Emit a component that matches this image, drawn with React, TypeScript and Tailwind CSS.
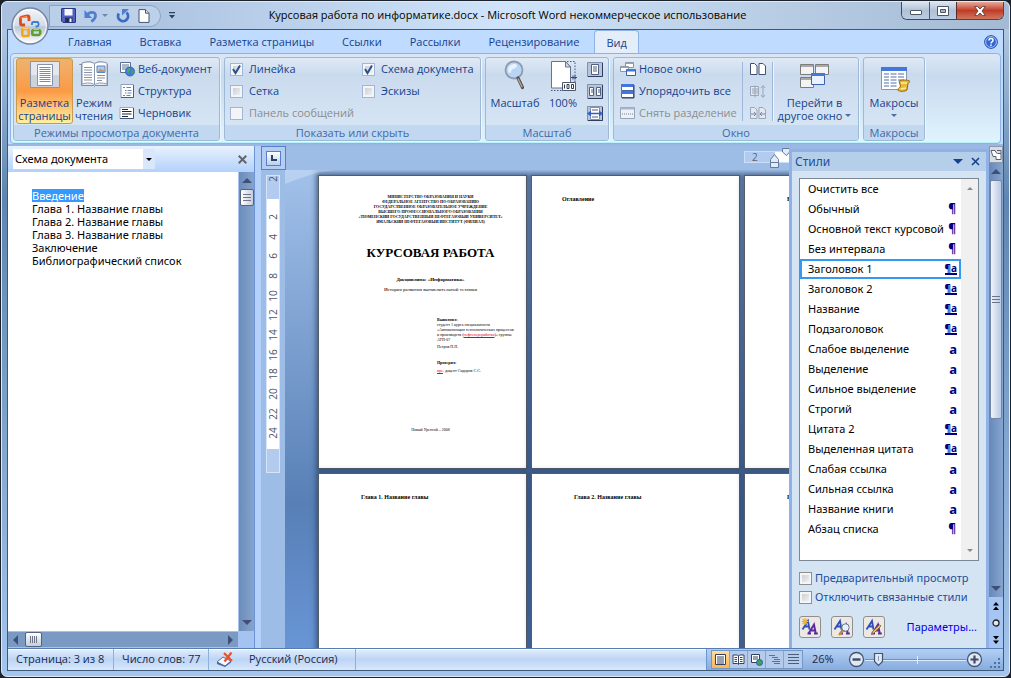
import type { ReactNode } from "react";
import clsx from "clsx";

const UI = "font-['Open_Sans','Noto_Sans',sans-serif]";
const TAHOMA = "font-['Noto_Sans','Open_Sans',sans-serif]";

const tabs = ["Главная", "Вставка", "Разметка страницы", "Ссылки", "Рассылки", "Рецензирование", "Вид"];

const outline = [
  "Введение",
  "Глава 1. Название главы",
  "Глава 2. Название главы",
  "Глава 3. Название главы",
  "Заключение",
  "Библиографический список",
];

const styles: [string, string][] = [
  ["Очистить все", ""],
  ["Обычный", "¶"],
  ["Основной текст курсовой", "¶"],
  ["Без интервала", "¶"],
  ["Заголовок 1", "¶a"],
  ["Заголовок 2", "¶a"],
  ["Название", "¶a"],
  ["Подзаголовок", "¶a"],
  ["Слабое выделение", "a"],
  ["Выделение", "a"],
  ["Сильное выделение", "a"],
  ["Строгий", "a"],
  ["Цитата 2", "¶a"],
  ["Выделенная цитата", "¶a"],
  ["Слабая ссылка", "a"],
  ["Сильная ссылка", "a"],
  ["Название книги", "a"],
  ["Абзац списка", "¶"],
];

const rulerMarks = [2, 4, 6, 8, 10, 12, 14, 16, 18, 20, 22, 24];

function Arrow({ dir, small, className = "fill-[#3f4f78]" }: { dir: "up" | "down" | "left" | "right"; small?: boolean; className?: string }) {
  const d = { up: "M0 5 5 0l5 5z", down: "M0 0h10L5 5z", left: "M5 0v10L0 5z", right: "M0 0v10l5-5z" }[dir];
  const wide = dir === "up" || dir === "down";
  return (
    <svg
      viewBox={wide ? "0 0 10 5" : "0 0 5 10"}
      className={clsx("shrink-0", small ? "h-[3px] w-[6px]" : wide ? "h-[5px] w-[10px]" : "h-[10px] w-[5px]", className)}
    >
      <path d={d} />
    </svg>
  );
}

/* ---------- title bar ---------- */

function OfficeButton() {
  return (
    <button aria-label="Office" className="absolute left-[9px] top-[5px] z-10 h-[38px] w-[38px] rounded-full">
      <svg viewBox="0 0 38 38" className="h-full w-full">
        <defs>
          <linearGradient id="orb" x1="0" y1="0" x2="0" y2="1">
            <stop offset="0" stopColor="#f4f6fa" />
            <stop offset=".5" stopColor="#d3dae6" />
            <stop offset=".52" stopColor="#bcc6d7" />
            <stop offset="1" stopColor="#fff" />
          </linearGradient>
        </defs>
        <circle cx="19" cy="19" r="18" fill="url(#orb)" stroke="#7486a3" strokeWidth="1.4" />
        <circle cx="19" cy="19" r="16.4" fill="none" stroke="#fff" strokeOpacity=".8" />
        <g fill="none" strokeLinejoin="round">
          <path d="M14 18H11a1.500 1.500 0 0 1-1.500-1.500v-5A1.500 1.500 0 0 1 10.700 10l5.800-1.200A1.300 1.300 0 0 1 18 10v4" stroke="#df4b17" strokeWidth="2.800" />
          <path d="M9.500 11l6.500-1.700" stroke="#f79a5c" strokeWidth="1" />
          <path d="M21 18v-1.500a1.500 1.500 0 0 1 1.500-1.500H26a1.500 1.500 0 0 1 1.500 1.500V18a1.500 1.500 0 0 1-1.500 1.500h-1.500" stroke="#3b7fd0" strokeWidth="1.900" />
          <path d="M12.500 22h4a1.200 1.200 0 0 1 1.200 1.200v4.600a1.200 1.200 0 0 1-1.200 1.200h-4a1.200 1.200 0 0 1-1.200-1.200v-4.600A1.200 1.200 0 0 1 12.500 22z" stroke="#f4a61a" strokeWidth="2.600" />
          <path d="M12 21.600h5" stroke="#fcd879" strokeWidth="1" />
          <path d="M22.500 23H28a1.200 1.200 0 0 1 1.200 1.200v2.300L28 28h-5.500a1.200 1.200 0 0 1-1.200-1.200v-2.600A1.200 1.200 0 0 1 22.500 23z" stroke="#5f9f2c" strokeWidth="2.600" />
          <path d="M22.500 22.500H28" stroke="#a7d66f" strokeWidth="1" />
        </g>
      </svg>
    </button>
  );
}

function QuickAccess() {
  return (
    <div className="ml-[40px] flex items-center">
      <div className="flex h-[22px] items-center rounded-r-full border border-[#8ba3c2] bg-[#c3d5ec]/70 pl-[11px] pr-2.5">
        <button aria-label="Сохранить">
          <svg viewBox="0 0 15 15" className="h-[15px] w-[15px]">
            <path d="M1 .5h13a.5.5 0 0 1 .5.5v13a.5.5 0 0 1-.5.5H2L.5 13V1A.5.5 0 0 1 1 .5z" fill="#5262c4" stroke="#2c357f" />
            <path d="M3.500 1h8v6.500h-8z" fill="#f4f7ff" />
            <path d="M4 9.500h7.500V14H4z" fill="#2a2f55" />
            <path d="M8.500 10.500h2V14h-2z" fill="#fff" />
          </svg>
        </button>
        <button aria-label="Отменить" className="ml-2">
          <svg viewBox="0 0 14 14" className="h-[14px] w-[14px]">
            <path d="M3 6C6 2 12 2.500 11.500 7c-.2 2.500-2 4.200-4.200 5.500" fill="none" stroke="#4f7fce" strokeWidth="2.800" />
            <path d="M.5 1v8h7.500z" fill="#4f7fce" />
          </svg>
        </button>
        <Arrow dir="down" small className="ml-1 fill-[#6f88b2]" />
        <button aria-label="Повторить" className="ml-2">
          <svg viewBox="0 0 14 14" className="h-[14px] w-[14px]">
            <path d="M2.800 4.500A5 5 0 1 0 10.500 3.500" fill="none" stroke="#3a6cc4" strokeWidth="2.800" />
            <path d="M6 6.500V0h7z" fill="#4f7fce" />
          </svg>
        </button>
        <button aria-label="Создать" className="ml-2">
          <svg viewBox="0 0 12 14" className="h-[14px] w-[12px]">
            <path d="M1 .6h6.500l3.500 3.600v9.200H1z" fill="#fff" stroke="#44546f" />
            <path d="M7.500.6v3.600H11" fill="#dce4ee" stroke="#44546f" />
          </svg>
        </button>
      </div>
      <button aria-label="Настройка панели" className="ml-2">
        <svg viewBox="0 0 6 7" className="h-[7px] w-[6px]">
          <path d="M0 0h6v1.300H0zM0 3h6L3 6.500z" fill="#28406a" />
        </svg>
      </button>
    </div>
  );
}

function WindowButtons() {
  return (
    <div className="absolute right-[5px] top-0 flex h-[18px] overflow-hidden rounded-b-md border border-t-0 border-[#3e4a5c]">
      <button aria-label="Свернуть" className="flex w-7 items-end justify-center border-r border-[#4c5a70] bg-linear-to-b from-[#dbe5f0] via-[#b1c2d7] to-[#b9cce2] pb-1">
        <span className="h-[5px] w-3 rounded-[1px] border border-[#4d5667] bg-white" />
      </button>
      <button aria-label="Развернуть" className="flex w-[27px] items-center justify-center border-r border-[#5b2a2a] bg-linear-to-b from-[#dbe5f0] via-[#b1c2d7] to-[#b9cce2]">
        <svg viewBox="0 0 12 10" className="h-[10px] w-3">
          <path d="M.5.5h11v9H.5z" fill="#fff" stroke="#4d5667" />
          <path d="M3.500 3.500h5v3h-5z" fill="#a4b5cc" stroke="#4d5667" />
        </svg>
      </button>
      <button aria-label="Закрыть" className="flex w-[46px] items-center justify-center bg-linear-to-b from-[#e6a89a] via-[#bf3b25] to-[#d0755e]">
        <svg viewBox="0 0 12 10" className="h-[10px] w-3">
          <path d="M.6.6h3L6 3 8.400.6h3L8 5l3.400 4.400h-3L6 7 3.600 9.400h-3L4 5z" fill="#fff" stroke="#5f3a3a" strokeWidth=".9" />
        </svg>
      </button>
    </div>
  );
}

/* ---------- ribbon ---------- */

function Group({ title, className, children }: { title: string; className: string; children: ReactNode }) {
  return (
    <section className={clsx("flex shrink-0 flex-col overflow-hidden rounded-[3px] border border-[#9db9d6] bg-linear-to-b from-[#dfe9f5] from-0% via-[#cbdbee] via-20% to-[#d9e8f6] shadow-[1px_1px_0_#edf5fd]", className)}>
      <div className="flex min-h-0 flex-1">{children}</div>
      <h2 className="h-[15px] bg-[#c1d8f0] text-center leading-[15px] text-[#3e6aaa]">{title}</h2>
    </section>
  );
}

function SmallButton({ icon, label, disabled }: { icon: ReactNode; label: string; disabled?: boolean }) {
  return (
    <button disabled={disabled} className={clsx("flex h-[22px] items-center gap-[3px] whitespace-nowrap", disabled && "text-[#8d8d8d]")}>
      <svg viewBox="0 0 16 16" className="h-4 w-4 shrink-0">{icon}</svg>
      {label}
    </button>
  );
}

function BigButton({ icon, lines, className }: { icon: ReactNode; lines: ReactNode[]; className?: string }) {
  return (
    <button className={clsx("flex flex-col items-center", className)}>
      <svg viewBox="0 0 32 32" className="mb-1 h-8 w-8 shrink-0">{icon}</svg>
      {lines.map((l, i) => (
        <span key={i} className="flex h-[13px] items-center gap-[3px] whitespace-nowrap leading-[13px]">{l}</span>
      ))}
    </button>
  );
}

function Check({ label, checked, disabled, className, box = "border-[#9fb6d6]" }: { label: string; checked?: boolean; disabled?: boolean; className?: string; box?: string }) {
  return (
    <label className={clsx("flex items-center whitespace-nowrap", disabled && "text-[#8d8d8d]", className)}>
      <span className="relative h-[13px] w-[13px] shrink-0">
        <input
          type="checkbox"
          defaultChecked={checked}
          disabled={disabled}
          className={clsx(
            "peer block h-[13px] w-[13px] appearance-none border bg-linear-to-br from-[#c3c8cf] to-[#f8f8f8] shadow-[inset_0_0_0_2px_#f4f5f7] disabled:bg-none disabled:bg-[#f4f4f4]",
            box,
          )}
        />
        <svg viewBox="0 0 13 13" className="pointer-events-none absolute inset-0 hidden peer-checked:block">
          <path d="M3 6l2.500 4L10 2.500" fill="none" stroke="#2f4f88" strokeWidth="2" />
        </svg>
      </span>
      {label}
    </label>
  );
}

const icons = {
  layout: (
    <>
      <path d="M1.500 1.500h29v26h-29z" fill="#e4e7ed" stroke="#8b95a6" />
      <path d="M2 15h28v12H2z" fill="#cdd2dc" />
      <path d="M8.500 4.500h15v21h-15z" fill="#fff" stroke="#8592a8" />
      <path d="M10.500 7.500h11m-11 2h11m-11 2h11m-11 2h11m-11 2h11m-11 2h11m-11 2h11m-11 2h11" stroke="#7d8ba5" />
    </>
  ),
  reading: (
    <>
      <path d="M1.500 4.500h2v21h12l1 1 1-1h12v-21h-2V3c-4-1.500-9-1.500-11 1-2-2.500-7-2.500-12-1v1.500z" fill="#e8edf5" stroke="#7a8aa5" />
      <path d="M4 3c5-1.500 10-1.500 12.500 1v21C14 22.500 9 22.500 4 24z" fill="#fff" stroke="#8b98ae" />
      <path d="M29 3c-5-1.500-10-1.500-12.500 1v21C19 22.500 24 22.500 29 24z" fill="#fff" stroke="#8b98ae" />
      <path d="M6 7.500h8M6 10h8m-8 2.500h8M6 15h8m-8 2.500h8M6 20h8m5-4.500h8m-8 2.500h8m-8 2.500h5" stroke="#8793a8" />
      <path d="M19 6h8v6.500h-8z" fill="#a9cdf4" stroke="#5b87c4" />
      <path d="M19.500 12l3-3.500 2 2 1.500-1 1 2.500z" fill="#e08a4c" />
    </>
  ),
  web: (
    <>
      <path d="M1.500 1.500h10v10h-10z" fill="#fff" stroke="#5a6f92" />
      <path d="M3 4h7M3 6h7M3 8h5" stroke="#5a6f92" />
      <circle cx="11" cy="10.500" r="4.500" fill="#3c7fd6" stroke="#2d5c9f" strokeWidth=".8" />
      <path d="M8 8.500c2-2 3.500-1.500 3 .5s-2 1-1.500 3-2-.5-1.500-3.500zM13 9l2 1.500-1.500 3z" fill="#4fae46" />
    </>
  ),
  outline: (
    <>
      <path d="M2 1.500h12.500v13H2z" fill="#fff" stroke="#8f9fbc" />
      <path d="M14.500 2v12.500H2" fill="none" stroke="#46618f" />
      <path d="M4 4.500h2m1.500 0h4.500M6 7.500h1.500m1 0h4M6 10h1.500m1 0h4M4 12.500h2m1.500 0h4" stroke="#6b83b3" />
    </>
  ),
  draft: (
    <>
      <path d="M1 2.500h13.500v11H1z" fill="#fff" stroke="#9aa8c0" />
      <path d="M14.500 3v10.500H1" fill="none" stroke="#3e547e" />
      <path d="M3 4.500h6M3 6.500h9.500M3 9h9.500M3 11.500h6" stroke="#1e2636" />
    </>
  ),
  zoom: (
    <>
      <circle cx="15" cy="10" r="8.500" fill="#b9d5f5" stroke="#8f9cb2" strokeWidth="1.800" />
      <path d="M9 9.500a6 6 0 0 1 6-5.500c3 0 4 2 2 3.500s-4 1-5 4-3 1-3-2z" fill="#e9f3fe" />
      <path d="M19 18l4.500 9.500" stroke="#57504f" strokeWidth="3.200" strokeLinecap="round" />
      <path d="M19 18.500l4.200 8.700" stroke="#b3a8a4" strokeWidth="1.300" />
    </>
  ),
  hundred: (
    <>
      <path d="M20 1.500h8v21M4 30.500h13" fill="none" stroke="#3f5680" strokeDasharray="1.500 1.500" />
      <path d="M4.500 1.500h14l5 5.500v21h-19z" fill="#fff" stroke="#66748c" />
      <path d="M18.500 1.500V7h5z" fill="#d5dde8" stroke="#66748c" />
      <path d="M24 17.500h6m-2-2v4m-2-4v4" fill="none" stroke="#3b4b6b" />
      <path d="M15.500 22.500h13v8h-13z" fill="#fff" stroke="#4b586f" />
      <path d="M17.500 24.500v4M20 24.500h2v4h-2zM24.500 24.500h2v4h-2z" fill="none" stroke="#1f2533" strokeWidth=".9" />
    </>
  ),
  newWindow: (
    <>
      <path d="M5.500 1.500h8v5h-8zM.5 5.500h8v5h-8z" fill="#fff" stroke="#8a93a3" />
      <path d="M5.500 1.500h8v1.500h-8zM.5 5.500h8V7h-8z" fill="#9aa2ae" />
      <path d="M6.500 8.500h9v6h-9z" fill="#fff" stroke="#3d5fa5" />
      <path d="M6.500 8h9v2.500h-9z" fill="#4377dd" />
    </>
  ),
  arrange: (
    <>
      <path d="M1.500 1.500h12v6h-12zM1.500 8.500h12v6h-12z" fill="#fff" stroke="#4a68a8" />
      <path d="M1 1h13v3H1zM1 8h13v3H1z" fill="#4377dd" />
      <path d="M14 2v13H2" fill="none" stroke="#2f3f66" />
    </>
  ),
  split: (
    <>
      <path d="M.5 2.500h14v11H.5z" fill="#eef2f7" stroke="#96a3b8" />
      <path d="M.5 2.500h14v2H.5z" fill="#a9b6ca" />
      <path d="M2 9h12" stroke="#6e7f9d" strokeDasharray="1 1" />
    </>
  ),
  switchWindow: (
    <>
      <path d="M1.500 4.500h13v10h-13zM16.500 4.500h13v10h-13zM1.500 17.500h13v10h-13z" fill="#f3f3f3" stroke="#7c7c7c" />
      <path d="M2 5h12v2H2zM17 5h12v2H17zM2 18h12v2H2z" fill="#a9a9a9" />
      <path d="M12.500 13.500h13v11h-13z" fill="#eaf2ff" stroke="#3b62ae" />
      <path d="M12 13h14v3H12z" fill="#4377dd" />
    </>
  ),
  macros: (
    <>
      <path d="M3.500 7.500h25v22h-25z" fill="#fff" stroke="#8a97ab" />
      <path d="M3 7h26v4H3z" fill="#4377dd" />
      <path d="M6 14h5m1.500 0h6m1.500 0h6M6 17h5m1.500 0h6m1.500 0h6M6 20h5m1.500 0h6m1.500 0h6M6 23h5m1.500 0h6M6 26h5m1.500 0h6" stroke="#8ba0c8" strokeWidth="1.500" />
      <path d="M21 21.500c2-2 9-2 11 0l-2 2-1 6.500c-2 1.500-7 2-9.500 0 1-2 2.500-2 3-4z" fill="#e9b92f" stroke="#8f6a12" />
      <path d="M23 23h6m-6.500 6 5.500-1" stroke="#fbe9a0" strokeWidth="1.500" />
    </>
  ),
};

function ZoomPreset({ label, children }: { label: string; children: ReactNode }) {
  return (
    <button aria-label={label} className="flex h-[22px] items-center">
      <svg viewBox="0 0 16 15" className="h-[15px] w-4">
        <path d="M.5.5h15v14H.5z" fill="#b7c4da" stroke="#8191ad" />
        <path d="M15.500 1v13.500H1" fill="none" stroke="#2e3e62" />
        {children}
      </svg>
    </button>
  );
}

function Ribbon() {
  return (
    <div className="mx-[2px] flex h-[91px] shrink-0 gap-1 rounded border border-[#8db2e3] bg-linear-to-b from-[#dbe7f5] via-[#c8daee] via-25% to-[#e0f4ff] px-[2px] pb-[2px] pt-[3px] shadow-[inset_0_-1px_0_#b8f0fb]">
      <Group title="Режимы просмотра документа" className="w-[207px]">
        <BigButton
          icon={icons.layout}
          lines={["Разметка", "страницы"]}
          className="ml-[2px] h-[66px] w-[57px] rounded-[3px] border border-[#c79a4c] bg-linear-to-b from-[#efb26d] from-0% via-[#fb9a45] via-50% to-[#fff0a0] pt-px"
        />
        <BigButton icon={icons.reading} lines={["Режим", "чтения"]} className="w-[42px] pt-[2px]" />
        <div className="ml-1 flex flex-col">
          <SmallButton icon={icons.web} label="Веб-документ" />
          <SmallButton icon={icons.outline} label="Структура" />
          <SmallButton icon={icons.draft} label="Черновик" />
        </div>
      </Group>
      <Group title="Показать или скрыть" className="w-[257px]">
        <div className="ml-[5px] grid grid-cols-[132px_auto] grid-rows-[22px_22px_22px]">
          <Check label="Линейка" checked className="gap-1.5" />
          <Check label="Схема документа" checked className="gap-1.5" />
          <Check label="Сетка" className="gap-1.5" />
          <Check label="Эскизы" className="gap-1.5" />
          <Check label="Панель сообщений" disabled className="gap-1.5" />
        </div>
      </Group>
      <Group title="Масштаб" className="w-[124px]">
        <BigButton icon={icons.zoom} lines={["Масштаб"]} className="ml-1 w-[50px] pt-[2px]" />
        <BigButton icon={icons.hundred} lines={["100%"]} className="w-[46px] pt-[2px]" />
        <div className="ml-px flex flex-col">
          <ZoomPreset label="Одна страница">
            <path d="M4.500 2.500h7v10h-7z" fill="#fff" stroke="#50607f" />
            <path d="M6 5h4M6 7h4M6 9h4" stroke="#50607f" />
          </ZoomPreset>
          <ZoomPreset label="Две страницы">
            <path d="M2.500 3.500h4v8h-4zM9.500 3.500h4v8h-4z" fill="#fff" stroke="#50607f" />
            <path d="M4 6h2M4 8h2M11 6h2m-2 2h2" stroke="#50607f" />
          </ZoomPreset>
          <ZoomPreset label="По ширине страницы">
            <path d="M3.500 1.500h9v12h-9z" fill="#fff" stroke="#8191ad" />
            <path d="M5 4h6M5 11h6" stroke="#50607f" />
            <path d="M4 7.500h8" stroke="#2f62c9" strokeWidth="1.500" />
            <path d="M0 7.500 4 4.500v6zM16 7.500l-4-3v6z" fill="#2f62c9" />
          </ZoomPreset>
        </div>
      </Group>
      <Group title="Окно" className="w-[246px]">
        <div className="ml-[6px] flex w-[121px] flex-col">
          <SmallButton icon={icons.newWindow} label="Новое окно" />
          <SmallButton icon={icons.arrange} label="Упорядочить все" />
          <SmallButton icon={icons.split} label="Снять разделение" disabled />
        </div>
        <div className="my-1 ml-[1px] flex w-[31px] flex-col items-center border-x border-[#9db8db] shadow-[1px_0_0_#eef5fd]">
          <button aria-label="Рядом" className="h-[14px]">
            <svg viewBox="0 0 16 13" className="h-[13px] w-4">
              <path d="M.5.500h4l2.500 2.500v8.500H.500zM9 .500h4l2.500 2.500v8.500H9z" fill="#fff" stroke="#3f5074" />
            </svg>
          </button>
          <button aria-label="Синхронная прокрутка" disabled className="mt-2 h-[14px]">
            <svg viewBox="0 0 16 13" className="h-[13px] w-4">
              <path d="M.5 1.500h8v9h-8zM5 .500v12M2 4h6M2 6h6M2 8h6" fill="#e4e9f1" stroke="#98a5ba" />
              <path d="M13 1v11M11 3l2-2.500L15 3m-4 7 2 2.500 2-2.500" fill="none" stroke="#98a5ba" />
            </svg>
          </button>
          <button aria-label="Восстановить положение" disabled className="mt-2 h-[14px]">
            <svg viewBox="0 0 16 13" className="h-[13px] w-4">
              <path d="M.5.500h4l2.500 2.500v8.500H.500zM9 .500h4l2.500 2.500v8.500H9z" fill="#e4e9f1" stroke="#98a5ba" />
              <path d="M1 7h5M4 5l2 2-2 2m11-2h-5m2-2-2 2 2 2" fill="none" stroke="#7686a3" />
            </svg>
          </button>
        </div>
        <BigButton
          icon={icons.switchWindow}
          lines={["Перейти в", <>другое окно <Arrow dir="down" small className="fill-[#4a6fa8]" /></>]}
          className="w-[83px] pt-[2px]"
        />
      </Group>
      <Group title="Макросы" className="w-[62px]">
        <BigButton icon={icons.macros} lines={["Макросы", <Arrow dir="down" small className="fill-[#4a6fa8]" />]} className="w-[60px] pt-[2px]" />
      </Group>
    </div>
  );
}

/* ---------- document map ---------- */

function DocumentMap() {
  return (
    <aside className="flex w-[246px] shrink-0 flex-col bg-white">
      <header className="flex h-[26px] items-center justify-between bg-linear-to-b from-[#e9f2fe] to-[#b3d1fb] pl-[5px] pr-[7px]">
        <div className="relative">
          <select aria-label="Область" className={clsx(TAHOMA, "h-5 w-[142px] appearance-none bg-white pl-[2px] text-[11px] text-black")}>
            <option>Схема документа</option>
          </select>
          <span className="pointer-events-none absolute right-0 top-0 flex h-full w-3 items-center justify-center bg-[#d8e7fb]">
            <Arrow dir="down" small className="fill-black" />
          </span>
        </div>
        <button aria-label="Закрыть">
          <svg viewBox="0 0 9 9" className="h-[9px] w-[9px]">
            <path d="M.7.7l7.600 7.600M8.300.7.7 8.300" stroke="#62666e" strokeWidth="2" />
          </svg>
        </button>
      </header>
      <div className="flex min-h-0 flex-1">
        <nav className={clsx(TAHOMA, "min-w-0 flex-1 pl-6 pt-[17px] text-[11px] text-black")}>
          <ul>
            {outline.map((t, i) => (
              <li key={t} className="h-[13px] leading-[13px]">
                <a href="#doc" className={clsx(i === 0 && "inline-block bg-[#3399ff] text-white")}>{t}</a>
              </li>
            ))}
          </ul>
        </nav>
        <div className="flex w-[16px] flex-col items-center border-l border-[#a9c5ee] bg-linear-to-r from-[#6b8cba] to-[#86a4cd] pb-[6px] pt-[6px]">
          <Arrow dir="up" />
          <div className="mt-1.5 flex h-[17px] w-[14px] flex-col justify-center gap-[2px] rounded-[2px] border border-[#56657f] bg-linear-to-r from-white to-[#c7ccd8] px-[2px]">
            <span className="h-px bg-[#6d7689]" />
            <span className="h-px bg-[#6d7689]" />
            <span className="h-px bg-[#6d7689]" />
          </div>
          <Arrow dir="down" className="mt-auto fill-[#3f4f78]" />
        </div>
      </div>
      <div className="flex h-[17px] bg-[#a4c3f1]">
        <div className="flex flex-1 items-center border-y border-[#a4c3f1] bg-[#7a9ac4] px-[5px]">
          <Arrow dir="left" />
          <div className="ml-[7px] flex h-[15px] w-[17px] items-center justify-center gap-px rounded-[2px] border border-[#56657f] bg-linear-to-b from-white to-[#c7ccd8]">
            <span className="h-[7px] w-px bg-[#6d7689]" />
            <span className="h-[7px] w-px bg-[#6d7689]" />
            <span className="h-[7px] w-px bg-[#6d7689]" />
            <span className="h-[7px] w-px bg-[#6d7689]" />
          </div>
          <Arrow dir="right" className="ml-auto fill-[#3f4f78]" />
        </div>
        <div className="w-4" />
      </div>
    </aside>
  );
}

/* ---------- pages ---------- */

function Page({ children }: { children?: ReactNode }) {
  return (
    <article className="h-[294px] overflow-hidden border border-[#555d68] bg-white font-['Liberation_Serif',serif] text-black shadow-[0_0_5px_2px_rgba(30,55,95,0.65)]">
      {children}
    </article>
  );
}

function TitlePage() {
  return (
    <Page>
      <div className="pl-4 pt-[18px] text-center text-[4px] font-bold leading-[5px]">
        <p>МИНИСТЕРСТВО ОБРАЗОВАНИЯ И НАУКИ</p>
        <p>ФЕДЕРАЛЬНОЕ АГЕНТСТВО ПО ОБРАЗОВАНИЮ</p>
        <p>ГОСУДАРСТВЕННОЕ ОБРАЗОВАТЕЛЬНОЕ УЧРЕЖДЕНИЕ</p>
        <p>ВЫСШЕГО ПРОФЕССИОНАЛЬНОГО ОБРАЗОВАНИЯ</p>
        <p>«ТЮМЕНСКИЙ ГОСУДАРСТВЕННЫЙ НЕФТЕГАЗОВЫЙ УНИВЕРСИТЕТ»</p>
        <p>ЯМАЛЬСКИЙ НЕФТЕГАЗОВЫЙ ИНСТИТУТ (ФИЛИАЛ)</p>
      </div>
      <h1 className="mt-[21px] pl-4 text-center text-[13px] font-bold leading-4">КУРСОВАЯ РАБОТА</h1>
      <p className="mt-4 pl-4 text-center text-[5px] leading-[6px]">
        <b>Дисциплина: «Информатика»</b>
      </p>
      <p className="mt-1 pl-4 text-center text-[5px] leading-[6px]">История развития вычислительной техники</p>
      <div className="mt-[24px] pl-[118px] text-[4px] leading-[5px]">
        <p className="font-bold">Выполнил:</p>
        <p>студент 1 курса специальности</p>
        <p className="whitespace-nowrap">«Автоматизация технологических процессов</p>
        <p className="whitespace-nowrap">
          и производств (<span className="text-red-600 underline">нефтепереработка</span>)» группы
        </p>
        <p>АТП-07</p>
        <p className="mt-[2px]">Петров П.П.</p>
        <p className="mt-[11px] font-bold">Проверил:</p>
        <p className="mt-[3px]">
          <span className="text-red-600 underline">пре</span>. доцент Сидоров С.С.
        </p>
      </div>
      <p className="mt-[54px] pl-4 text-center text-[4px] leading-[5px]">Новый Уренгой – 2008</p>
    </Page>
  );
}

function HeadingPage({ title, className }: { title: string; className: string }) {
  return (
    <Page>
      <h3 className={clsx("whitespace-nowrap pt-5 text-[6px] font-bold leading-[6px]", className)}>{title}</h3>
    </Page>
  );
}

function DocumentArea() {
  return (
    <main id="doc" className="flex min-w-0 flex-1 flex-col bg-[#9ebde6]">
      <div className="flex h-6 shrink-0">
        <button aria-label="Табуляция" className="flex w-[25px] items-center justify-center border border-[#5580d0] bg-[#b4cdf0]">
          <span className="flex h-[15px] w-[15px] items-center justify-center border border-[#5580d0] bg-linear-to-b from-white to-[#b8d0ef]">
            <span className="h-[6px] w-[6px] border-b-2 border-l-2 border-[#32405c]" />
          </span>
        </button>
        <div className="relative flex min-w-0 flex-1 justify-end pt-[5px]">
          <div className="flex h-3 w-[45px] border border-r-0 border-[#cddff6] bg-[#b2cbee] text-[10px] leading-[10px] text-[#55657f]">
            <span className="w-[30px] pl-[7px]">2</span>
            <span className="flex-1 bg-white" />
          </div>
          <svg viewBox="0 0 24 22" className="absolute right-0 top-[2px] h-[22px] w-6">
            <path d="M5.500 14.500v-3l4-5 4 5v3zM5.500 14.500h8v5h-8z" fill="#e2ecf9" stroke="#64799c" />
            <path d="M17.500.500h7v3.500l-3 3.500-4-3.500z" fill="#e2ecf9" stroke="#64799c" />
          </svg>
        </div>
      </div>
      <div className="flex min-h-0 flex-1">
        <div className="flex w-6 shrink-0 flex-col items-center pt-[5px]">
          <div className="flex h-[298px] w-[14px] flex-col border border-[#d5e4f8] bg-[#b2cbee] text-[10px] text-[#4d5566]">
            <div className="flex h-[23px] items-start justify-center overflow-hidden">
              <span className="-rotate-90 leading-[6px]">2</span>
            </div>
            <div className="flex h-[250px] flex-col bg-white pb-[6px] pt-2">
              {rulerMarks.map((m) => (
                <div key={m} className="flex flex-1 items-center justify-center">
                  <span className="-rotate-90 leading-none">{m}</span>
                </div>
              ))}
            </div>
          </div>
        </div>
        <div className="relative min-w-0 flex-1 overflow-hidden bg-linear-to-b from-[#a2c1ea] via-[#5880b6] via-70% to-[#6895d6]">
          <svg viewBox="0 0 50 14" className="absolute left-0 top-0 h-[14px] w-[50px]">
            <path d="M0 0h50Q25 3 0 14z" fill="#b9d1f1" />
          </svg>
          <div className="relative grid grid-cols-[209px_209px_209px] gap-1 pl-[33px] pt-[5px]">
            <TitlePage />
            <HeadingPage title="Оглавление" className="pl-[30px]" />
            <HeadingPage title="Введение" className="pl-[42px]" />
            <HeadingPage title="Глава 1. Название главы" className="pl-[42px]" />
            <HeadingPage title="Глава 2. Название главы" className="pl-[42px]" />
            <HeadingPage title="Глава 3. Название главы" className="pl-[42px]" />
          </div>
        </div>
      </div>
    </main>
  );
}

/* ---------- styles pane ---------- */

function StyleMark({ mark }: { mark: string }) {
  if (mark === "¶a") return <span className="border-b-2 border-[#000080] text-[10px] font-bold leading-[9px]">¶a</span>;
  return <span className={clsx("font-bold leading-none", mark === "a" ? "text-[13px]" : "pr-px text-[12px]")}>{mark}</span>;
}

function StyleButton({ label, children }: { label: string; children?: ReactNode }) {
  return (
    <button aria-label={label} className="flex h-[22px] w-[22px] items-center justify-center rounded-[3px] border border-[#8f8f8f] bg-[#ece9e4]">
      <svg viewBox="0 0 18 18" className="h-[18px] w-[18px]">
        <path d="M1.500 11.500 7 3l1.500 8.500M4 8.500h4" fill="none" stroke="#2f4fb8" strokeWidth="1.800" />
        <path d="M7.500 15.500 13 6.500l1.800 9M10 12.500h4.500M6.500 15.500h3.500m3 0h3.800" fill="none" stroke="#5b2a9c" strokeWidth="1.900" />
        {children}
      </svg>
    </button>
  );
}

function StylesPane() {
  return (
    <aside className={clsx(TAHOMA, "mt-[3px] flex w-[200px] shrink-0 flex-col border-[3px] border-b-0 border-[#8fb1e5] bg-[#d5e4f3] text-[11px]")}>
      <header className="flex h-[19px] items-center bg-[#b5cfeb] pl-[3px] pr-[6px]">
        <h2 className="flex-1 text-[12px] text-[#1d4f9c]">Стили</h2>
        <Arrow dir="down" className="fill-[#15428b]" />
        <button aria-label="Закрыть" className="ml-2">
          <svg viewBox="0 0 9 9" className="h-[9px] w-[9px]">
            <path d="M1 1l7 7M8 1 1 8" stroke="#15428b" strokeWidth="1.600" />
          </svg>
        </button>
      </header>
      <div className="mx-[7px] mt-[7px] flex h-[383px] border border-[#7b8795] bg-white">
        <ul className="flex min-w-0 flex-1 flex-col text-black">
          {styles.map(([name, mark]) => (
            <li key={name}>
              <button
                className={clsx(
                  "flex h-5 w-full items-center justify-between whitespace-nowrap border-2 pl-[6px] pr-[2px]",
                  name === "Заголовок 1" ? "border-[#3399f5]" : "border-transparent",
                )}
              >
                {name}
                <span className="flex text-[#000080]">
                  <StyleMark mark={mark} />
                </span>
              </button>
            </li>
          ))}
        </ul>
        <div className="flex w-[17px] flex-col items-center justify-between bg-[#f0f0f0] py-2">
          <Arrow dir="up" small className="fill-[#8a8a8a]" />
          <Arrow dir="down" small className="fill-[#8a8a8a]" />
        </div>
      </div>
      <div className="mx-[7px] mt-2 flex flex-col text-[#1e4f9c]">
        <Check label="Предварительный просмотр" className="h-[19px] gap-[3px]" box="border-[#8e8f8f]" />
        <Check label="Отключить связанные стили" className="h-[19px] gap-[3px]" box="border-[#8e8f8f]" />
      </div>
      <div className="mx-[7px] mt-[9px] flex items-center gap-[10px]">
        <StyleButton label="Создать стиль">
          <path d="M4 0v7M.5 3.500h7M1.500 1l5 5m0-5-5 5" stroke="#f0b428" strokeWidth="1.200" />
        </StyleButton>
        <StyleButton label="Инспектор стилей">
          <path d="M10.500 12 6 17" stroke="#c98a3c" strokeWidth="2.200" />
          <circle cx="12.500" cy="9.500" r="3.700" fill="#e4f1ff" stroke="#6c7686" />
        </StyleButton>
        <StyleButton label="Управление стилями">
          <path d="M16 8l-7 7-2.500 1.500 1-2.700 7-7z" fill="#f3c86a" stroke="#7d5a22" strokeWidth=".8" />
        </StyleButton>
        <a href="#styles" className="ml-auto whitespace-nowrap pr-[2px] text-[#0000ee]">Параметры...</a>
      </div>
    </aside>
  );
}

function DocumentScrollbar() {
  return (
    <div className="flex w-[14px] shrink-0 flex-col items-center bg-[#a6c5f2]">
      <button aria-label="Линейка" className="flex h-[17px] w-[14px] items-center justify-center border border-[#8a98ae] bg-[#d8dde5]">
        <svg viewBox="0 0 12 12" className="h-3 w-3">
          <path d="M1 1.500h4l1 2 1.500 1H11v6H6v-3H3z" fill="#fff" stroke="#596273" />
          <path d="M7 1.500h4v3" fill="none" stroke="#596273" />
        </svg>
      </button>
      <div className="flex w-full flex-1 flex-col items-center bg-linear-to-r from-[#6788b8] to-[#86a5d0] pb-[6px] pt-[6px]">
        <Arrow dir="up" />
        <div className="mt-[6px] flex h-[239px] w-3 flex-col items-center justify-center gap-[2px] rounded-[2px] border border-[#7486a5] bg-linear-to-r from-[#eff3fa] to-[#b9c9e2]">
          <span className="h-px w-2 bg-[#6d7689]" />
          <span className="h-px w-2 bg-[#6d7689]" />
          <span className="h-px w-2 bg-[#6d7689]" />
        </div>
        <Arrow dir="down" className="mt-auto fill-[#3f4f78]" />
      </div>
      <div className="flex h-[51px] flex-col items-center justify-around">
        <svg viewBox="0 0 6 8" className="h-2 w-1.5"><path d="M0 3.500 3 0l3 3.500zM0 8l3-3.500L6 8z" /></svg>
        <svg viewBox="0 0 8 8" className="h-2 w-2"><circle cx="4" cy="4" r="3" fill="#e8e8e8" stroke="#222" strokeWidth="1.300" /></svg>
        <svg viewBox="0 0 6 8" className="h-2 w-1.5"><path d="M0 0h6L3 3.500zM0 4.500h6L3 8z" /></svg>
      </div>
    </div>
  );
}

/* ---------- status bar ---------- */

const views: { label: string; icon: ReactNode }[] = [
  { label: "Разметка страницы", icon: <path d="M1.500 1.500h10v10h-10zM3 4h7M3 6h7M3 8h7m-7 2h7" fill="#fff" stroke="#33415e" /> },
  { label: "Режим чтения", icon: <path d="M1 2h4.500l1 1 1-1H12v8.500H7.500l-1 1-1-1H1zM6.500 3v8M2.500 4.500H5m-2.500 2H5m-2.500 2H5m3-4h2.500m-2.500 2h2.500m-2.500 2h2.500" fill="#fff" stroke="#33415e" /> },
  {
    label: "Веб-документ",
    icon: (
      <>
        <path d="M1.500 1.500h8v8h-8zM3 4h5M3 6h5" fill="#fff" stroke="#33415e" />
        <circle cx="9.500" cy="9.500" r="3" fill="#3fa05a" stroke="#2a5ea8" />
      </>
    ),
  },
  { label: "Структура", icon: <path d="M1 2.500h6M4 4.500h6M6 6.500h6M4 8.500h8M6 10.500h6" fill="none" stroke="#5f6f8c" /> },
  { label: "Черновик", icon: <path d="M1 1.500h11M1 4.500h11M1 7.500h11M1 10.500h11" fill="none" stroke="#4b5b79" /> },
];

function StatusBar() {
  return (
    <footer className="flex h-[22px] shrink-0 items-stretch whitespace-nowrap border-t border-[#567db1] bg-linear-to-b from-[#e3eefc] via-[#bcd4f5] via-50% to-[#d9e8fb] text-[#15284e] shadow-[inset_0_1px_0_#fff]">
      <span className="flex w-[106px] items-center border-r border-[#8fb0df] pl-2">Страница: 3 из 8</span>
      <span className="flex w-[95px] items-center border-r border-[#8fb0df] pl-2">Число слов: 77</span>
      <span className="flex w-[147px] items-center gap-4 border-r border-[#8fb0df] pl-[7px]">
        <svg viewBox="0 0 17 15" className="h-[15px] w-[17px]">
          <path d="M1 10l6-5 8 4-6 5z" fill="#f4f7fc" stroke="#5b6f98" />
          <path d="M1 10v2l8 3 6-4.500V9l-6 5z" fill="#3e66b8" />
          <path d="M8 1l8 8M15.500.5 8.500 9.500" stroke="#e8512c" strokeWidth="2.200" />
        </svg>
        Русский (Россия)
      </span>
      <div className="ml-auto flex items-center border-l border-[#6f97cf] bg-linear-to-b from-[#b4cff4] to-[#86acde] pl-1 text-[#15284e]">
        <div className="flex h-[19px] items-stretch border border-[#7397c9]">
          {views.map((v, i) => (
            <button
              key={v.label}
              aria-label={v.label}
              className={clsx("flex w-[18px] items-center justify-center border-r border-[#86a5d0] last:border-r-0", i === 0 ? "bg-linear-to-b from-[#fddba0] to-[#f9b653]" : "bg-[#b4cbec]")}
            >
              <svg viewBox="0 0 13 13" className="h-[13px] w-[13px]">{v.icon}</svg>
            </button>
          ))}
        </div>
        <span className="ml-[9px] w-9">26%</span>
        <button aria-label="Уменьшить">
          <svg viewBox="0 0 17 17" className="h-[17px] w-[17px]">
            <circle cx="8.500" cy="8.500" r="7" fill="#dfe8f4" stroke="#44546f" strokeWidth="1.300" />
            <path d="M4.500 8.500h8" stroke="#3d4b66" strokeWidth="2.400" />
          </svg>
        </button>
        <div className="relative h-[17px] w-[101px]">
          <svg viewBox="0 0 101 17" className="h-full w-full">
            <path d="M0 8.500h101" stroke="#6d8fc0" />
            <path d="M0 9.500h101M52.500 5v8" stroke="#dcebfd" />
            <path d="M9.500 2.500h8v8l-4 4-4-4z" fill="#dde8f6" stroke="#44546f" strokeWidth="1.200" />
            <path d="M13.500 5v5" stroke="#8b9cb8" />
          </svg>
          <input type="range" aria-label="Масштаб" min={10} max={500} defaultValue={26} className="absolute inset-0 w-full opacity-0" />
        </div>
        <button aria-label="Увеличить">
          <svg viewBox="0 0 17 17" className="h-[17px] w-[17px]">
            <circle cx="8.500" cy="8.500" r="7" fill="#dfe8f4" stroke="#44546f" strokeWidth="1.300" />
            <path d="M4.500 8.500h8m-4-4v8" stroke="#3d4b66" strokeWidth="2.200" />
          </svg>
        </button>
        <svg viewBox="0 0 12 12" className="ml-[7px] mr-px h-3 w-3 self-end fill-[#4f6fa5]">
          <path d="M8 0h2v2H8zM4 4h2v2H4zM8 4h2v2H8zM0 8h2v2H0zM4 8h2v2H4zM8 8h2v2H8z" />
        </svg>
      </div>
    </footer>
  );
}

export default function App() {
  return (
    <div className={clsx(UI, "flex h-screen w-full flex-col bg-[#1c222c] text-[11px] text-[#15428b]")}>
      <div className="relative m-px flex min-h-0 flex-1 flex-col rounded-md border border-[#dceafa] bg-linear-to-b from-[#bcd2ea] from-0% via-[#5f86b0] via-29% to-[#a4c6ec] px-[5px] pb-[5px]">
        <header className="relative -mx-[5px] flex h-[27px] shrink-0 items-center rounded-t-md bg-linear-to-r from-[#a9c0de] from-10% via-[#cfe4fa] via-50% to-[#a4bad3] px-[7px]">
          <QuickAccess />
          <h1 className="flex-1 whitespace-nowrap pl-[68px] text-center text-black">
            Курсовая работа по информатике.docx - Microsoft Word некоммерческое использование
          </h1>
          <div className="w-[230px]" />
        </header>
        <OfficeButton />
        <WindowButtons />
        <div className="flex min-h-0 flex-1 flex-col border border-[#3d5878] bg-[#bfdbff]">
          <nav className="flex h-[23px] shrink-0 items-stretch gap-[2px] pl-[47px] pr-[5px]">
            {tabs.map((t) => (
              <button
                key={t}
                className={clsx(
                  "pt-[2px]",
                  t === "Вид" ? "-mb-px rounded-t border border-b-0 border-[#8db2e3] bg-[#e4eefa] px-[11px]" : "px-[13px]",
                )}
              >
                {t}
              </button>
            ))}
            <button aria-label="Справка" className="ml-auto">
              <svg viewBox="0 0 14 14" className="h-[14px] w-[14px]">
                <circle cx="7" cy="7" r="6.300" fill="#2f66d8" stroke="#1c408f" />
                <circle cx="7" cy="7" r="5.400" fill="none" stroke="#cfe0fb" strokeWidth=".8" />
                <path d="M5 5.500c0-2.600 4-2.600 4 0C9 7 7 6.800 7 8.500M7 9.500v1.500" fill="none" stroke="#fff" strokeWidth="1.500" />
              </svg>
            </button>
          </nav>
          <Ribbon />
          <div className="h-[2px] shrink-0 bg-[#9ab8e3]" />
          <div className="flex min-h-0 flex-1 bg-[#9ab8e3]">
            <DocumentMap />
            <div className="w-[7px] shrink-0 border-l border-[#6d93d2] bg-[#b3d1fb]" />
            <DocumentArea />
            <StylesPane />
            <DocumentScrollbar />
          </div>
          <StatusBar />
        </div>
      </div>
    </div>
  );
}
